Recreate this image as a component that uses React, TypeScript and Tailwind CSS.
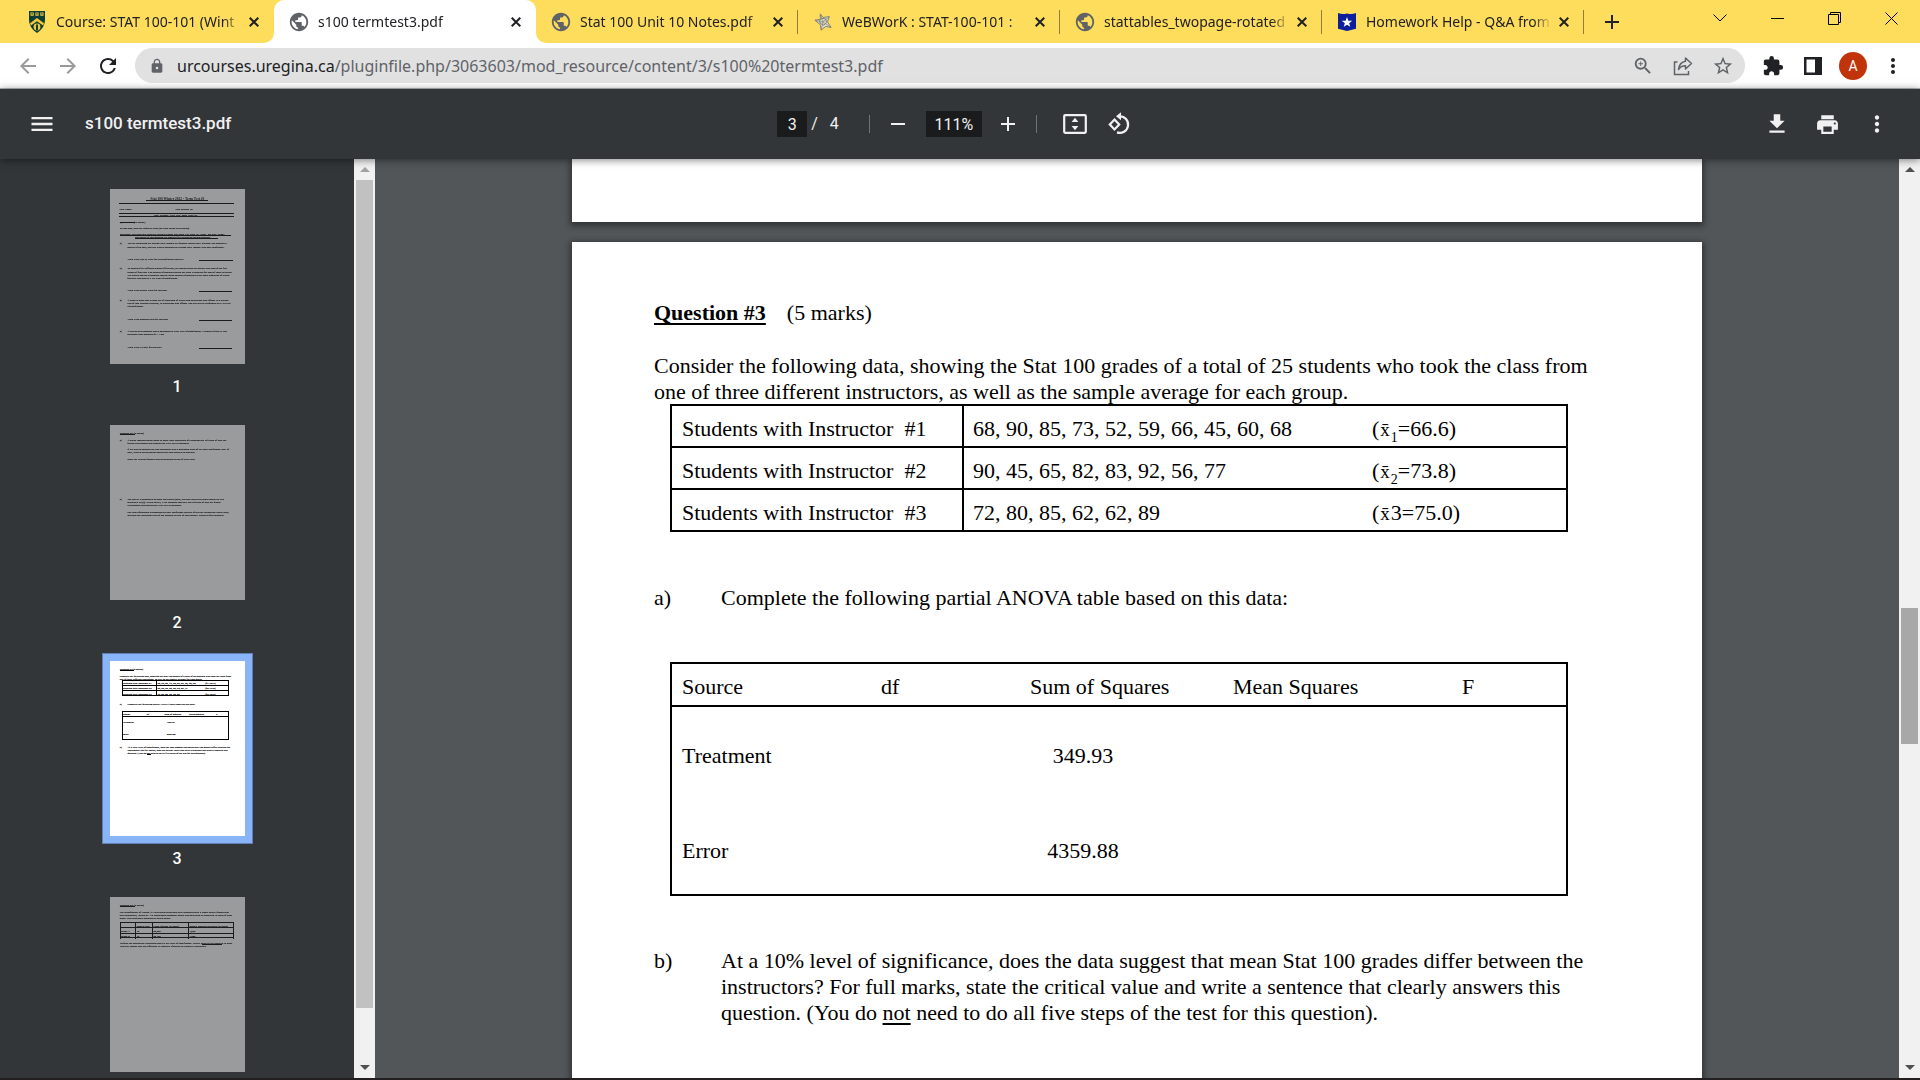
import type { ReactNode } from 'react';
import clsx from 'clsx';
import {
  MdAdd,
  MdArrowBack,
  MdArrowForward,
  MdExtension,
  MdFileDownload,
  MdLock,
  MdMenu,
  MdMoreVert,
  MdPrint,
  MdPublic,
  MdRefresh,
  MdRemove,
  MdStarBorder,
  MdZoomIn,
} from 'react-icons/md';

const CrestIcon = () => (
  <svg viewBox="0 0 18 22" className="h-[22px] w-[18px]">
    <path d="M1 0h16v8.500c0 6-3.500 10.500-8 13.500C4.500 19 1 14.500 1 8.500z" fill="#0b3f36" />
    <path d="M2.500 1.500h3.200v3.200H2.500zM7.400 1.500h3.200v3.200H7.400zM12.300 1.500h3.200v3.200h-3.200z" fill="#f5c93b" />
    <path d="M3.400 2.200h1.400v1.400H3.400zM8.300 2.200h1.400v1.400H8.300zM13.200 2.200h1.400v1.400h-1.400z" fill="#0b3f36" />
    <path d="M9 7l7 5.200-.9 2.400L9 10.300l-6.100 4.300L2 12.200z" fill="#f5c93b" />
    <circle cx="9" cy="16" r="3.400" fill="#f5c93b" />
    <path d="M8 13.500h2v5.500H8z" fill="#0b3f36" />
  </svg>
);

const WebIcon = () => (
  <svg viewBox="0 0 20 20" className="size-5" fill="none" stroke="#7b7a72">
    <path d="M7 1l3 4 7-1-2 6 4 6-6-1-5 4-1-6-6-5 6-1z" fill="#dcd9c8" strokeWidth="1" />
    <path d="M9 6l4 .500 1 4-3 3-4-2-1-3z" strokeWidth="1" />
    <path d="M7 1l3 9 7-6M10 10l9 6M10 10l-2 9M10 10L1 8" strokeWidth=".7" />
  </svg>
);

const ShieldStarIcon = () => (
  <svg viewBox="0 0 20 20" className="size-5">
    <path d="M0 0c3.500 1.400 6.500 1.400 10 .500 3.500.900 6.500.900 10-.500v17.500L10 20 0 17.500z" fill="#0b1f9c" />
    <path d="M10 4.500l1.500 4 4.300.200-3.400 2.600 1.200 4.100-3.600-2.300-3.600 2.300 1.200-4.100-3.400-2.600 4.300-.200z" fill="#fff" />
  </svg>
);

const CloseIcon = () => (
  <svg viewBox="0 0 10 10" className="size-2.5" fill="none" stroke="currentColor" strokeWidth="2">
    <path d="M.700.700l8.600 8.600M9.300.700L.700 9.300" />
  </svg>
);

const ShareIcon = () => (
  <svg viewBox="0 0 20 20" className="size-5" fill="none" stroke="#5f6368" strokeWidth="1.500">
    <path d="M4.500 6H1.500v12.500h14V15" />
    <path d="M12.500 2l6 5.500-6 5.500V9.800C9 9.800 7 11 5.500 13.500 6 9 8.500 6 12.500 5.300z" strokeLinejoin="round" />
  </svg>
);

const SidePanelIcon = () => (
  <svg viewBox="0 0 18 18" className="size-[18px]">
    <path d="M0 0h18v18H0z" fill="#202124" />
    <path d="M2.500 2.500H11v13H2.500z" fill="#fff" />
  </svg>
);

const FitPageIcon = () => (
  <svg viewBox="0 0 24 20" className="h-5 w-6" fill="none">
    <rect x="1.200" y="1.200" width="21.600" height="17.600" rx="1" stroke="#f1f1f1" strokeWidth="2.200" />
    <path d="M12 3.800l3.400 4.200H8.600zM12 16.200l3.400-4.200H8.600z" fill="#f1f1f1" />
  </svg>
);

const RotateIcon = () => (
  <svg viewBox="0 0 24 24" className="size-6" fill="none" stroke="#f1f1f1" strokeWidth="2.200">
    <path d="M7.500 7.600l4.700 4.900-4.700 4.900-4.700-4.900z" />
    <path d="M12.500 4.300a8.300 8.300 0 1 1-2.500 16.100" />
    <path d="M14 .300v8L9 4.300z" fill="#f1f1f1" stroke="none" />
  </svg>
);

const globe = <MdPublic className="size-[22px] shrink-0 text-[#5f6368]" />;

const tabs: { title: string; icon: ReactNode; active?: boolean; divider?: boolean }[] = [
  { title: 'Course: STAT 100-101 (Wint', icon: <CrestIcon /> },
  { title: 's100 termtest3.pdf', icon: globe, active: true },
  { title: 'Stat 100 Unit 10 Notes.pdf', icon: globe, divider: true },
  { title: 'WeBWorK : STAT-100-101 :', icon: <WebIcon />, divider: true },
  { title: 'stattables_twopage-rotated', icon: globe, divider: true },
  { title: 'Homework Help - Q&A from', icon: <ShieldStarIcon />, divider: true },
];

const IconButton = ({
  label,
  className,
  children,
}: {
  label: string;
  className?: string;
  children: ReactNode;
}) => (
  <button
    type="button"
    aria-label={label}
    className={clsx('flex shrink-0 items-center justify-center', className)}
  >
    {children}
  </button>
);

const TabStrip = () => (
  <div className="flex h-[43px] shrink-0 bg-[#ffdd5c] pl-3">
    <div className="flex min-w-0 flex-1">
      {tabs.map((tab) => (
        <div
          key={tab.title}
          className={clsx(
            'relative flex min-w-0 max-w-[262px] flex-1 items-center pr-3 pl-4',
            tab.active && 'rounded-t-[10px] bg-white'
          )}
        >
          {tab.active && (
            <>
              <span className="absolute bottom-0 -left-2.5 size-2.5 bg-white">
                <span className="block size-2.5 rounded-br-[10px] bg-[#ffdd5c]" />
              </span>
              <span className="absolute -right-2.5 bottom-0 size-2.5 bg-white">
                <span className="block size-2.5 rounded-bl-[10px] bg-[#ffdd5c]" />
              </span>
            </>
          )}
          <span className="flex w-[18px] shrink-0 justify-center">{tab.icon}</span>
          <a
            href="#"
            className="ml-2.5 min-w-0 flex-1 overflow-hidden text-sm whitespace-nowrap text-[#202124] mask-r-from-90%"
          >
            {tab.title}
          </a>
          <IconButton label={`Close ${tab.title}`} className="ml-1 size-4 text-[#202124]">
            <CloseIcon />
          </IconButton>
          {tab.divider && <span className="absolute right-0 h-6 w-px bg-[#8f7d3c]" />}
        </div>
      ))}
      <IconButton label="New tab" className="ml-4 w-6 text-[#202124]">
        <MdAdd className="size-6" />
      </IconButton>
    </div>
    <div className="flex h-9 text-black">
      <IconButton label="Search tabs" className="w-14">
        <svg viewBox="0 0 14 8" className="h-2 w-3.5" fill="none" stroke="currentColor">
          <path d="M.500.500L7 7l6.500-6.500" />
        </svg>
      </IconButton>
      <IconButton label="Minimize" className="w-[58px]">
        <svg viewBox="0 0 13 1" className="h-px w-[13px]">
          <path d="M0 0h13v1H0z" />
        </svg>
      </IconButton>
      <IconButton label="Restore" className="w-14">
        <svg viewBox="0 0 13 13" className="size-[13px]" fill="none" stroke="currentColor">
          <path d="M.500 2.500h10v10H.500zM2.500 2.500v-2h10v10h-2" />
        </svg>
      </IconButton>
      <IconButton label="Close window" className="w-[58px]">
        <svg viewBox="0 0 13 13" className="size-[13px]" fill="none" stroke="currentColor">
          <path d="M.500.500l12 12M12.500.500l-12 12" />
        </svg>
      </IconButton>
    </div>
  </div>
);

const AddressBar = () => (
  <div className="flex h-[46px] shrink-0 items-center border-b border-[#b9bbbd] bg-white pr-[7px] pl-2">
    <IconButton label="Back" className="h-8 w-10 text-[#9a9a9a]">
      <MdArrowBack className="size-6" />
    </IconButton>
    <IconButton label="Forward" className="h-8 w-10 text-[#9a9a9a]">
      <MdArrowForward className="size-6" />
    </IconButton>
    <IconButton label="Reload" className="h-8 w-10 text-[#202124]">
      <MdRefresh className="size-6" />
    </IconButton>
    <div className="ml-[7px] flex h-[35px] min-w-0 flex-1 items-center rounded-full bg-[#e1e1e1] pr-[2px] pl-3.5">
      <MdLock className="size-4 shrink-0 text-[#5f6368]" />
      <div
        role="textbox"
        aria-label="Address"
        className="ml-3 min-w-0 flex-1 overflow-hidden text-base whitespace-nowrap text-[#5f6368]"
      >
        <span className="text-[#202124]">urcourses.uregina.ca</span>
        /pluginfile.php/3063603/mod_resource/content/3/s100%20termtest3.pdf
      </div>
      <IconButton label="Zoom" className="w-10 text-[#5f6368]">
        <MdZoomIn className="size-[22px]" />
      </IconButton>
      <IconButton label="Share" className="w-10">
        <ShareIcon />
      </IconButton>
      <IconButton label="Bookmark" className="w-10 text-[#5f6368]">
        <MdStarBorder className="size-[22px]" />
      </IconButton>
    </div>
    <IconButton label="Extensions" className="ml-2 w-10 text-[#202124]">
      <MdExtension className="size-[22px]" />
    </IconButton>
    <IconButton label="Side panel" className="w-10">
      <SidePanelIcon />
    </IconButton>
    <IconButton label="Profile" className="w-10">
      <span className="flex size-7 items-center justify-center rounded-full bg-[#c1330b] font-['Roboto',sans-serif] text-sm text-white">
        A
      </span>
    </IconButton>
    <IconButton label="Browser menu" className="w-10 text-[#202124]">
      <MdMoreVert className="size-6" />
    </IconButton>
  </div>
);

const PdfToolbar = () => (
  <div className="relative z-10 flex h-[70px] shrink-0 items-center bg-[#323639] font-['Roboto',sans-serif] text-base text-[#f1f1f1] shadow-[0_1px_8px_rgba(0,0,0,0.5)]">
    <div className="flex flex-1 items-center pl-[26px]">
      <IconButton label="Toggle sidebar" className="size-8">
        <MdMenu className="size-7" />
      </IconButton>
      <h1 className="ml-[27px] text-[17px] font-medium whitespace-nowrap">s100 termtest3.pdf</h1>
    </div>
    <div className="flex items-center pr-[7px]">
      <input
        aria-label="Page number"
        defaultValue="3"
        className="h-[26px] w-[30px] bg-[#191b1c] text-center"
      />
      <span className="ml-1">/</span>
      <span className="ml-3">4</span>
      <span className="mr-3 ml-[30px] h-[18px] w-px bg-[#707375]" />
      <IconButton label="Zoom out" className="size-8">
        <MdRemove className="size-6" />
      </IconButton>
      <input
        aria-label="Zoom level"
        defaultValue="111%"
        className="mr-2.5 ml-3 h-[26px] w-14 bg-[#191b1c] text-center"
      />
      <IconButton label="Zoom in" className="size-8">
        <MdAdd className="size-6" />
      </IconButton>
      <span className="mr-[22px] ml-3 h-[18px] w-px bg-[#707375]" />
      <IconButton label="Fit to page" className="size-8">
        <FitPageIcon />
      </IconButton>
      <IconButton label="Rotate counterclockwise" className="ml-3 size-8">
        <RotateIcon />
      </IconButton>
    </div>
    <div className="flex flex-1 items-center justify-end gap-[18px] pr-[27px]">
      <IconButton label="Download" className="size-8">
        <MdFileDownload className="size-[26px]" />
      </IconButton>
      <IconButton label="Print" className="size-8">
        <MdPrint className="size-[25px]" />
      </IconButton>
      <IconButton label="More actions" className="size-8">
        <MdMoreVert className="size-[26px]" />
      </IconButton>
    </div>
  </div>
);

const Arrow = ({ up, muted }: { up?: boolean; muted?: boolean }) => (
  <svg viewBox="0 0 10 5" className={clsx('h-[5px] w-2.5', muted ? 'fill-[#a3a3a3]' : 'fill-[#505050]')}>
    <path d={up ? 'M5 0l5 5H0z' : 'M0 0h10L5 5z'} />
  </svg>
);

const Scrollbar = ({
  before,
  thumb,
  after,
  thumbClass,
  atTop,
}: {
  before: number;
  thumb: number;
  after: number;
  thumbClass: string;
  atTop?: boolean;
}) => (
  <div className="flex w-[21px] shrink-0 flex-col bg-[#f1f1f1] px-[2px]">
    <IconButton label="Scroll up" className="h-[21px]">
      <Arrow up muted={atTop} />
    </IconButton>
    <div style={{ flexGrow: before }} />
    <div className={thumbClass} style={{ flexGrow: thumb }} />
    <div style={{ flexGrow: after }} />
    <IconButton label="Scroll down" className="h-[21px]">
      <Arrow />
    </IconButton>
  </div>
);

// Thumbnails are drawn in PDF points (612 x 792)
type Line = [x: number, y: number, text: string];
type Rule = [x1: number, y1: number, x2: number, y2: number];

const thumbnails: { lines: Line[]; rules: Rule[]; heading?: string }[] = [
  {
    lines: [
      [42, 95, 'Your Name:'],
      [296, 95, 'Your Student ID:'],
      [200, 122, 'Due: Monday, April 11th, 2022, 4:45 PM'],
      [44, 154, 'Question #1:   (12 marks)'],
      [44, 181, 'In each case, state the required value (no work needs to be shown).'],
      [44, 208, 'Important! You must give both the variable symbol and value, e.g. write "z=1.645", not just "1.645".'],
      [113, 222, 'Two marks of this question are reserved for writing the correct symbols.'],
      [44, 249, 'a)'],
      [79, 249, 'You are estimating the average daily income at a farmers\' market stall. Suppose you consider a'],
      [79, 267, 'sample of 20 days, and you wish to estimate the average daily income with 95% confidence.'],
      [79, 322, 'What is the t (or z) value for this confidence interval?'],
      [44, 363, 'b)'],
      [79, 363, 'To compare five different brands of fertilizer, six tomato plants are grown with each of the five'],
      [79, 380, 'brands of fertilizer. The number of tomatoes grown per plant is recorded for each of these 30 plants.'],
      [79, 394, 'We want to test the hypothesis that the mean number of tomatoes is the same regardless of which'],
      [79, 408, 'fertilizer was used at a 1% level of significance.'],
      [79, 462, 'What is the critical value for this test?'],
      [44, 507, 'c)'],
      [79, 507, 'A claim is made that at most 5% of recipients of a new drug experience side effects. In a clinical'],
      [79, 521, 'trial of 200 volunteer patients, 15 experience side effects. The test is to be performed at a 1% level'],
      [79, 535, 'of significance.'],
      [79, 594, 'What is the standard error for this test?'],
      [44, 649, 'd)'],
      [79, 649, 'A two-tailed hypothesis test is conducted at a 5% level of significance. A sample of size n=100'],
      [79, 662, 'produces a test statistic of z = 1.88.'],
      [79, 721, 'What is the P-value for this test?'],
    ],
    rules: [
      [162, 52, 443, 52],
      [41, 65, 562, 65],
      [41, 110, 562, 110],
      [41, 124, 562, 124],
      [44, 151, 113, 151],
      [44, 210, 548, 210],
      [113, 223, 488, 223],
      [403, 323, 557, 323],
      [403, 464, 553, 464],
      [403, 595, 553, 595],
      [403, 722, 553, 722],
    ],
    heading: 'Stat 100 Winter 2022 - Term Test #3',
  },
  {
    lines: [
      [44, 41, 'Question #2:   (5 marks)'],
      [44, 73, 'a)'],
      [79, 73, 'A policy research group wants to know what proportion of Canadians are in favour of how the'],
      [79, 86, 'federal Government has handled the COVID-19 pandemic.'],
      [79, 113, 'If we wish to estimate the true proportion with a maximum error of 3% and a confidence level of'],
      [79, 127, '95%, what is the minimum sample size that needs to be studied?'],
      [79, 158, 'Show the relevant formula and calculations as part of your work.'],
      [44, 340, 'b)'],
      [79, 340, 'The survey is conducted on 2000 individuals (note, this may not be the same number as you'],
      [79, 353, 'calculated in (a)). In this survey, 1130 indicated that they are in favour of how the federal'],
      [79, 367, 'Government has handled the COVID-19 pandemic.'],
      [79, 398, 'Use this information to construct the 95% confidence interval of the true proportion. Show work,'],
      [79, 412, 'and state the maximum error of the estimate as part of your answer. Round to four decimals.'],
    ],
    rules: [[44, 43, 113, 43]],
  },
  {
    lines: [
      [44, 41, 'Question #3   (5 marks)'],
      [44, 73, 'Consider the following data, showing the Stat 100 grades of a total of 25 students who took the class from'],
      [44, 86, 'one of three different instructors, as well as the sample average for each group.'],
      [59, 103, 'Students with Instructor #1'],
      [215, 103, '68, 90, 85, 73, 52, 59, 66, 45, 60, 68'],
      [431, 103, '(x̄1=66.6)'],
      [59, 126, 'Students with Instructor #2'],
      [215, 126, '90, 45, 65, 82, 83, 92, 56, 77'],
      [431, 126, '(x̄2=73.8)'],
      [59, 152, 'Students with Instructor #3'],
      [215, 152, '72, 80, 85, 62, 62, 89'],
      [431, 152, '(x̄3=75.0)'],
      [44, 199, 'a)'],
      [79, 199, 'Complete the following partial ANOVA table based on this data:'],
      [59, 245, 'Source'],
      [167, 245, 'df'],
      [247, 245, 'Sum of Squares'],
      [358, 245, 'Mean Squares'],
      [481, 245, 'F'],
      [59, 280, 'Treatment'],
      [260, 280, '349.93'],
      [59, 335, 'Error'],
      [257, 335, '4359.88'],
      [44, 394, 'b)'],
      [79, 394, 'At a 10% level of significance, does the data suggest that mean Stat 100 grades differ between the'],
      [79, 408, 'instructors? For full marks, state the critical value and write a sentence that clearly answers this'],
      [79, 421, 'question. (You do not need to do all five steps of the test for this question).'],
    ],
    rules: [
      [44, 43, 108, 43],
      [56, 88, 538, 88],
      [56, 110, 538, 110],
      [56, 133, 538, 133],
      [56, 156, 538, 156],
      [56, 88, 56, 156],
      [210, 88, 210, 156],
      [538, 88, 538, 156],
      [56, 228, 538, 228],
      [56, 251, 538, 251],
      [56, 355, 538, 355],
      [56, 228, 56, 355],
      [538, 228, 538, 355],
      [168, 423, 185, 423],
    ],
  },
  {
    lines: [
      [44, 41, 'Question #4:   (5 marks)'],
      [44, 73, 'The manufacturer of "Brand A" LED bulbs claims that their lightbulbs have a longer mean lifespan than'],
      [44, 86, 'their competitor, "Brand B". An independent consumer group tests this claim by sampling 15 bulbs of each'],
      [44, 100, 'brand. Their summary statistics are given below:'],
      [121, 136, 'Sample Size'],
      [197, 136, 'Mean lifetime (in hours)'],
      [360, 136, 'Sample standard deviation (in hours)'],
      [50, 158, 'Brand A'],
      [121, 158, '15'],
      [197, 158, '25,000'],
      [360, 158, '1,200'],
      [50, 181, 'Brand B'],
      [121, 181, '15'],
      [197, 181, '24,100'],
      [360, 181, '1,400'],
      [44, 213, 'Perform the appropriate hypothesis test at a 5% level of significance. Clearly show all five steps as in class.'],
      [44, 226, 'You may assume that the difference in lightbulb lifetimes are normally distributed.'],
    ],
    rules: [
      [44, 43, 113, 43],
      [47, 115, 561, 115],
      [47, 138, 561, 138],
      [47, 165, 561, 165],
      [47, 183, 561, 183],
      [47, 115, 47, 190],
      [115, 115, 115, 190],
      [192, 115, 192, 190],
      [355, 115, 355, 190],
      [561, 115, 561, 190],
      [416, 215, 508, 215],
    ],
  },
];

const Sidebar = ({ selected }: { selected: number }) => (
  <nav aria-label="Pages" className="flex shrink-0 bg-[#323639]">
    <div className="flex w-[354px] flex-col items-center overflow-hidden pt-[30px]">
      {thumbnails.map(({ lines, rules, heading }, idx) => {
        const page = idx + 1;
        return (
          <a
            key={page}
            href={`#page=${page}`}
            className="mb-7 flex flex-col items-center font-['Roboto',sans-serif] text-base font-medium text-white"
          >
            <svg
              viewBox="0 0 612 792"
              preserveAspectRatio="none"
              className={clsx(
                'h-[175px] w-[135px] bg-white',
                page === selected
                  ? 'shadow-[0_0_0_7px_#8ab4f8,0_0_0_8px_#5f7fb5]'
                  : 'opacity-50'
              )}
              fontFamily="'Liberation Serif', serif"
              fontSize="12"
            >
              {heading && (
                <text x="306" y="50" fontSize="16" fontWeight="bold" textAnchor="middle">
                  {heading}
                </text>
              )}
              {lines.map(([x, y, text]) => (
                <text key={`${x}-${y}`} x={x} y={y} stroke="#000" strokeWidth=".600">
                  {text}
                </text>
              ))}
              {rules.map(([x1, y1, x2, y2]) => (
                <line
                  key={`${x1}-${y1}-${x2}-${y2}`}
                  x1={x1}
                  y1={y1}
                  x2={x2}
                  y2={y2}
                  stroke="#000"
                  strokeWidth="4.500"
                  shapeRendering="crispEdges"
                />
              ))}
            </svg>
            <span className="mt-[13px] leading-5">{page}</span>
          </a>
        );
      })}
    </div>
    <Scrollbar before={0} thumb={828} after={49} thumbClass="bg-[#c1c1c1]" atTop />
  </nav>
);

function Sub({ children }: { children: ReactNode }) {
  return <sub className="bottom-[-6px] text-sm leading-none">{children}</sub>;
}

const groups = [
  { id: 1, grades: '68, 90, 85, 73, 52, 59, 66, 45, 60, 68', sub: <Sub>1</Sub>, mean: '66.6' },
  { id: 2, grades: '90, 45, 65, 82, 83, 92, 56, 77', sub: <Sub>2</Sub>, mean: '73.8' },
  { id: 3, grades: '72, 80, 85, 62, 62, 89', sub: '3', mean: '75.0' },
];

const anova = [
  { source: 'Treatment', ss: '349.93', pad: 'pt-9' },
  { source: 'Error', ss: '4359.88', pad: 'pt-[69px] pb-[30px]' },
];

const sheet = 'w-[1130px] shrink-0 bg-white shadow-[0_2px_6px_2px_rgba(0,0,0,0.4)]';

const Document = () => (
  <main className="flex min-w-0 flex-1 flex-col items-center gap-5 overflow-hidden bg-[#525659] font-['Liberation_Serif',serif] text-[22px] leading-[26px] text-black">
    <div className={clsx(sheet, 'h-[63px]')} />
    <article className={clsx(sheet, 'min-h-[1465px] pt-[58px] pr-[98px] pl-[82px]')}>
      <h2>
        <span className="font-bold underline decoration-2 underline-offset-[3px] [text-decoration-skip-ink:none]">
          Question #3
        </span>
        <span className="ml-[21px]">(5 marks)</span>
      </h2>
      <p className="mt-[27px]">
        Consider the following data, showing the Stat 100 grades of a total of 25 students who took
        the class from one of three different instructors, as well as the sample average for each
        group.
      </p>
      <table className="-mt-px ml-4 w-[898px] table-fixed border-collapse border-2 border-black">
        <tbody>
          {groups.map(({ id, grades, sub, mean }) => (
            <tr key={id} className="h-[42px] border-b-2 border-black">
              <td className="w-[292px] border-r-2 border-black pt-[6px] pl-[10px] whitespace-pre">
                {`Students with Instructor  #${id}`}
              </td>
              <td className="w-[408px] pt-[6px] pl-[9px]">{grades}</td>
              <td className="pt-[6px] pl-px">
                (<span className="px-px text-[19px]">x̄</span>
                {sub}={mean})
              </td>
            </tr>
          ))}
        </tbody>
      </table>

      <div className="mt-[53px] flex">
        <span className="w-[67px] shrink-0">a)</span>
        <p>Complete the following partial ANOVA table based on this data:</p>
      </div>
      <table className="mt-[51px] ml-4 w-[898px] table-fixed border-collapse border-2 border-black text-left">
        <thead>
          <tr className="border-b-2 border-black">
            <th className="w-[200px] pt-[10px] pb-[5px] pl-[10px] font-normal">Source</th>
            <th className="w-[149px] pt-[10px] pb-[5px] pl-[10px] font-normal">df</th>
            <th className="w-[203px] pt-[10px] pb-[5px] pl-[10px] font-normal">Sum of Squares</th>
            <th className="w-[229px] pt-[10px] pb-[5px] pl-[10px] font-normal">Mean Squares</th>
            <th className="pt-[10px] pb-[5px] pl-[10px] font-normal">F</th>
          </tr>
        </thead>
        <tbody>
          {anova.map(({ source, ss, pad }) => (
            <tr key={source}>
              <td className={clsx('pl-[10px]', pad)}>{source}</td>
              <td />
              <td className={clsx('pr-[77px] text-center', pad)}>{ss}</td>
              <td />
              <td />
            </tr>
          ))}
        </tbody>
      </table>

      <div className="mt-[52px] flex">
        <span className="w-[67px] shrink-0">b)</span>
        <p>
          At a 10% level of significance, does the data suggest that mean Stat 100 grades differ
          between the instructors? For full marks, state the critical value and write a sentence
          that clearly answers this question. (You do{' '}
          <span className="underline decoration-2 underline-offset-[3px]">not</span> need to do all
          five steps of the test for this question).
        </p>
      </div>
    </article>
  </main>
);

export default function App() {
  return (
    <div className="flex h-screen flex-col overflow-hidden border-b-2 border-[#231f20] bg-[#323639] font-['Noto_Sans',sans-serif]">
      <TabStrip />
      <AddressBar />
      <PdfToolbar />
      <div className="flex min-h-0 flex-1">
        <Sidebar selected={3} />
        <Document />
        <Scrollbar before={428} thumb={136} after={313} thumbClass="bg-[#a8a8a8]" />
      </div>
    </div>
  );
}
